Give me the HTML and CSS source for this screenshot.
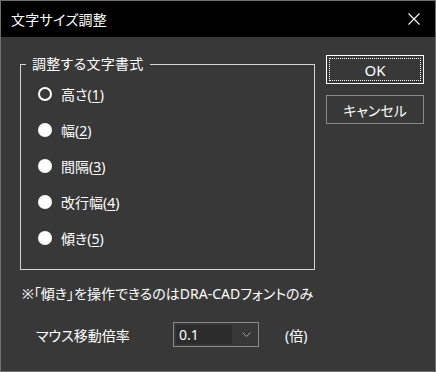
FILE: index.html
```html
<!DOCTYPE html>
<html lang="ja">
<head>
    <meta charset="UTF-8">
    <title>文字サイズ調整</title>
    <link rel="stylesheet" href="styles.css">
</head>
<body>
    <div class="dialog">
        <div class="titlebar">
            <span class="title">文字サイズ調整</span>
            <svg class="close" width="12" height="12" viewBox="0 0 12 12">
                <path d="M0.5 0.5 L11.5 11.5 M11.5 0.5 L0.5 11.5" stroke="#fff" stroke-width="1.1" fill="none"/>
            </svg>
        </div>

        <div class="content">
            <div class="main">
                <fieldset class="group">
                    <legend>調整する文字書式</legend>
                    <label class="option"><span class="radio checked"></span><span>高さ(<u>1</u>)</span></label>
                    <label class="option"><span class="radio"></span><span>幅(<u>2</u>)</span></label>
                    <label class="option"><span class="radio"></span><span>間隔(<u>3</u>)</span></label>
                    <label class="option"><span class="radio"></span><span>改行幅(<u>4</u>)</span></label>
                    <label class="option"><span class="radio"></span><span>傾き(<u>5</u>)</span></label>
                </fieldset>

                <p class="note">※「傾き」を操作できるのはDRA-CADフォントのみ</p>

                <div class="mouse-row">
                    <span class="mouse-label">マウス移動倍率</span>
                    <div class="combo">
                        <span class="combo-value">0.1</span>
                        <svg class="chevron" width="9" height="5" viewBox="0 0 9 5">
                            <path d="M0.5 0.5 L4.5 4.5 L8.5 0.5" stroke="#a0a0a0" stroke-width="1" fill="none"/>
                        </svg>
                    </div>
                    <span class="unit">(倍)</span>
                </div>
            </div>

            <div class="buttons">
                <button class="btn default"><span>OK</span></button>
                <button class="btn">キャンセル</button>
            </div>
        </div>
    </div>
</body>
</html>
```

FILE: styles.css
```css
body {
    margin: 0;
    background-color: #000;
    font-family: "Noto Sans", "Noto Sans CJK JP", sans-serif;
    font-size: 14px;
    color: #fff;
    font-feature-settings: "palt";
}

.dialog {
    width: 436px;
    height: 372px;
    box-sizing: border-box;
    border: 1px solid #6f6f6f;
    background-color: #383838;
}

.titlebar {
    height: 36px;
    background-color: #000;
    display: flex;
    align-items: center;
    justify-content: space-between;
    padding: 0 15px 0 10px;
}

.title {
    font-size: 14px;
    letter-spacing: 0.3px;
}

.close {
    display: block;
}

.content {
    display: flex;
    padding: 17px 0 0 19px;
}

.main {
    width: 295px;
}

.group {
    margin: 0;
    width: 295px;
    box-sizing: border-box;
    border: 1px solid #d4d4d4;
    padding: 2px 0 13px 17px;
}

.group legend {
    margin-left: -12px;
    padding: 0 6px;
    line-height: 20px;
    letter-spacing: 0.3px;
}

.option {
    display: flex;
    align-items: center;
    height: 36px;
    gap: 9px;
}

.option u {
    text-underline-offset: 2px;
}

.radio {
    width: 14px;
    height: 14px;
    border-radius: 50%;
    background-color: #fff;
    box-sizing: border-box;
}

.radio.checked {
    background-color: transparent;
    border: 2px solid #fff;
}

.note {
    margin: 14px 0 0 2px;
    line-height: 20px;
    white-space: nowrap;
}

.mouse-row {
    display: flex;
    align-items: center;
    margin-top: 18px;
    white-space: nowrap;
}

.mouse-label {
    width: 137px;
    padding-left: 16px;
}

.combo {
    width: 86px;
    height: 25px;
    box-sizing: border-box;
    border: 1px solid #8a8a8a;
    display: flex;
    align-items: center;
    padding: 2px;
}

.combo-value {
    flex: 1;
    height: 19px;
    line-height: 19px;
    background-color: #2c2c2c;
    padding-left: 3px;
    margin-right: 10px;
    font-size: 14px;
}

.chevron {
    margin-right: 5px;
}

.unit {
    margin-left: 26px;
}

.buttons {
    display: flex;
    flex-direction: column;
    gap: 11px;
    margin: 1px 0 0 11px;
}

.btn {
    width: 98px;
    height: 29px;
    box-sizing: border-box;
    background-color: #383838;
    color: #fff;
    border: 1px solid #8a8a8a;
    font-family: inherit;
    font-size: 14px;
    font-feature-settings: "palt";
    padding: 0;
}

.btn.default {
    border-color: #fff;
    padding: 2px;
}

.btn.default span {
    display: flex;
    align-items: center;
    justify-content: center;
    height: 100%;
    border: 1px dotted #fff;
    box-sizing: border-box;
    font-size: 15px;
}
```
